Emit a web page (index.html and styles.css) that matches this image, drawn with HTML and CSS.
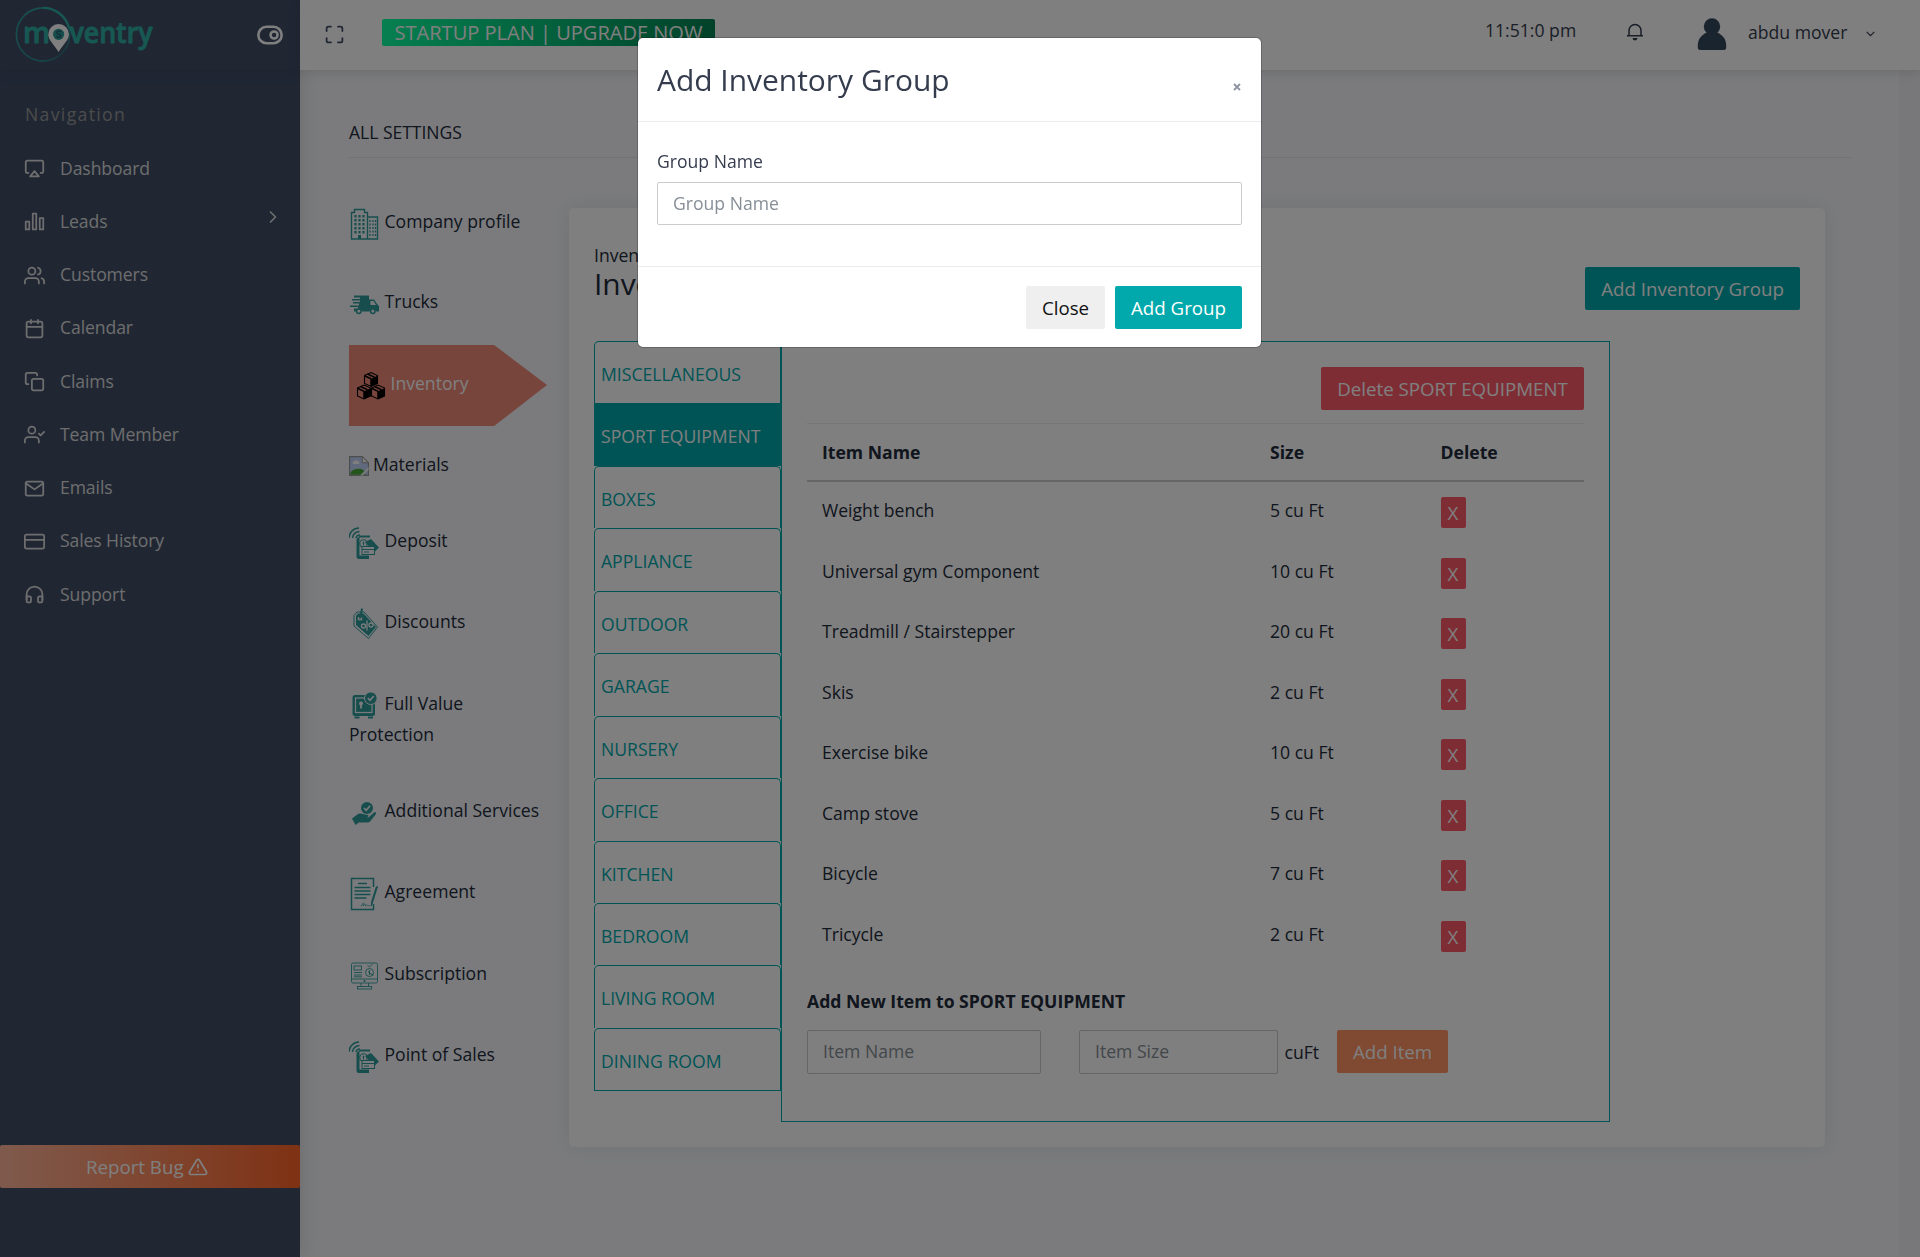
FILE: index.html
```html
<!DOCTYPE html>
<html lang="en">
<head>
<meta charset="utf-8">
<title>Moventry - Inventory settings</title>
<link rel="stylesheet" href="styles.css">
</head>
<body>
<svg class="defs" width="0" height="0">
  <symbol id="pos" viewBox="1 0 32 34">
    <path d="M1 12a10 10 0 0 1 10-10M4.500 12a7 7 0 0 1 7-6.500M8 12a4 4 0 0 1 4-3" fill="none" stroke="currentColor" stroke-width="1.500"/>
    <path d="M12 9.500h7l3 0v2H11.500v18H21v3.500H11a2.500 2.500 0 0 1-2.500-2.500V13z" fill="currentColor"/>
    <path d="M17 16l6-3 8 8.500-5 5z" fill="currentColor"/>
    <circle cx="15.500" cy="17.500" r="3.700" fill="none" stroke="currentColor" stroke-width="1.100"/>
    <path d="M15.500 15.500v4M14.500 17h2" stroke="currentColor"/>
    <rect x="14" y="20.500" width="12.500" height="8" fill="#f6f7fb" stroke="currentColor"/>
    <path d="M14 23.500h12.500M16 26h5" stroke="currentColor"/>
  </symbol>
</svg>
<div class="page">
  <aside class="sidebar">
    <div class="brand">
      <svg class="logo" width="145" height="62" viewBox="0 0 145 62">
        <defs><linearGradient id="ring" x1="0" y1="0" x2="1" y2="1"><stop offset="0" stop-color="#2fa5a2"/><stop offset=".75" stop-color="#2b8c91"/><stop offset="1" stop-color="#404e67"/></linearGradient></defs>
        <circle cx="30" cy="29.500" r="26.600" fill="none" stroke="url(#ring)" stroke-width="1.600"/>
        <path d="M30 2.900a26.600 26.600 0 0 1 26 20" fill="none" stroke="#2fb0a5" stroke-width="2.400"/>
        <text x="10" y="38" class="wordmark" textLength="27" lengthAdjust="spacingAndGlyphs">m</text>
        <text x="56.500" y="38" class="wordmark" textLength="83" lengthAdjust="spacingAndGlyphs">ventry</text>
        <path d="M45.600 19a10.300 10.300 0 0 1 10.300 10.300c0 6-5.500 9.700-10.300 17.700-4.800-8-10.300-11.700-10.300-17.700A10.300 10.300 0 0 1 45.600 19z" fill="#fff"/>
        <circle cx="45.600" cy="29.300" r="5.600" fill="#2c9a95"/>
        <path d="M48 27c-2-1.500-4.500-.8-4.300.8.200 1.500 4 1.300 4 3.200 0 1.700-3 1.800-4.600.4" fill="none" stroke="#27566c" stroke-width="1.200"/>
      </svg>
      <svg class="feather toggle" width="28" height="28" viewBox="0 0 24 24"><rect x="2" y="5" width="20" height="14" rx="7"/><circle cx="15.500" cy="12" r="3"/></svg>
    </div>
    <div class="nav-title">Navigation</div>
    <nav class="nav">
      <a><svg class="feather" viewBox="0 0 24 24"><path d="M5 17H4a2 2 0 0 1-2-2V5a2 2 0 0 1 2-2h16a2 2 0 0 1 2 2v10a2 2 0 0 1-2 2h-1"/><path d="M12 15l5 6H7z"/></svg><span>Dashboard</span></a>
      <a><svg class="feather" viewBox="0 0 24 24"><rect x="2" y="12" width="4" height="9"/><rect x="10" y="3" width="4" height="18"/><rect x="18" y="8" width="4" height="13"/></svg><span>Leads</span><svg class="feather chev" viewBox="0 0 24 24"><path d="M9 18l6-6-6-6"/></svg></a>
      <a><svg class="feather" viewBox="0 0 24 24"><path d="M17 21v-2a4 4 0 0 0-4-4H5a4 4 0 0 0-4 4v2"/><circle cx="9" cy="7" r="4"/><path d="M23 21v-2a4 4 0 0 0-3-3.870M16 3.130a4 4 0 0 1 0 7.750"/></svg><span>Customers</span></a>
      <a><svg class="feather" viewBox="0 0 24 24"><rect x="3" y="4" width="18" height="18" rx="2"/><path d="M16 2v4M8 2v4M3 10h18"/></svg><span>Calendar</span></a>
      <a><svg class="feather" viewBox="0 0 24 24"><rect x="9" y="9" width="13" height="13" rx="2"/><path d="M5 15H4a2 2 0 0 1-2-2V4a2 2 0 0 1 2-2h9a2 2 0 0 1 2 2v1"/></svg><span>Claims</span></a>
      <a><svg class="feather" viewBox="0 0 24 24"><path d="M17 21v-2a4 4 0 0 0-4-4H5a4 4 0 0 0-4 4v2"/><circle cx="9" cy="7" r="4"/><path d="M17 11l2 2 4-4"/></svg><span>Team Member</span></a>
      <a><svg class="feather" viewBox="0 0 24 24"><rect x="2" y="4" width="20" height="16" rx="2"/><path d="M22 6l-10 7L2 6"/></svg><span>Emails</span></a>
      <a><svg class="feather" viewBox="0 0 24 24"><rect x="1" y="4" width="22" height="16" rx="2"/><path d="M1 10h22"/></svg><span>Sales History</span></a>
      <a><svg class="feather" viewBox="0 0 24 24"><path d="M3 18v-6a9 9 0 0 1 18 0v6"/><path d="M21 19a2 2 0 0 1-2 2h-1a2 2 0 0 1-2-2v-3a2 2 0 0 1 2-2h3zM3 19a2 2 0 0 0 2 2h1a2 2 0 0 0 2-2v-3a2 2 0 0 0-2-2H3z"/></svg><span>Support</span></a>
    </nav>
    <div class="report">Report Bug <svg class="feather" viewBox="0 0 24 24"><path d="M10.290 3.860L1.820 18a2 2 0 0 0 1.710 3h16.940a2 2 0 0 0 1.710-3L13.710 3.860a2 2 0 0 0-3.420 0zM12 9v4M12 17v.1"/></svg></div>
  </aside>

  <div class="content">
    <header class="topbar">
      <svg class="feather full" viewBox="0 0 24 24"><path d="M8 3H5a2 2 0 0 0-2 2v3m18 0V5a2 2 0 0 0-2-2h-3m0 18h3a2 2 0 0 0 2-2v-3M3 16v3a2 2 0 0 0 2 2h3"/></svg>
      <div class="plan">STARTUP PLAN | UPGRADE NOW</div>
      <div class="clock">11:51:0 pm</div>
      <svg class="bell" width="18" height="19" viewBox="0 0 18 19"><path d="M1 12.800h16M3 12.500V7.500a6 6 0 0 1 12 0v5" fill="none" stroke="currentColor" stroke-width="1.500"/><path d="M6.500 15h5a2.500 2.500 0 0 1-5 0z" fill="currentColor"/></svg>
      <svg class="avatar" width="30" height="34" viewBox="0 0 30 34"><circle cx="15" cy="9.500" r="8.200"/><path d="M10 15.500h10c5 2 9.200 6 9.200 13v2a2.500 2.500 0 0 1-2.500 2.500H3.300A2.500 2.500 0 0 1 .8 30.500v-2c0-7 4.200-11 9.200-13z"/></svg>
      <div class="user">abdu mover</div>
      <svg class="caret" width="9" height="6" viewBox="0 0 9 6"><path d="M.7.8l3.800 3.800L8.300.8" fill="none" stroke="currentColor" stroke-width="1.200"/></svg>
    </header>

    <main class="main">
      <h6 class="page-title">ALL SETTINGS</h6>
      <div class="columns">
        <ul class="settings">
          <li class="h80"><svg width="32" height="34" viewBox="0 0 32 34"><path d="M2.500 32V5.500h3v-3h10v3h3V32zM18.500 10H28.500v22h-10z" fill="none" stroke="currentColor" stroke-width="1.400"/><path d="M6.500 8v19M10.500 8v19M14.500 8v19" stroke="currentColor" stroke-width="2.200" stroke-dasharray="2.500 1.500"/><path d="M21 13v17M24 13v17M26.500 13v17" stroke="currentColor" stroke-width="1.300" stroke-dasharray="2 1.500"/><path d="M9 28h3v4H9z" fill="currentColor"/></svg><span>Company profile</span></li>
          <li class="h82"><svg width="32" height="34" viewBox="0 0 32 34"><g transform="translate(0 5)"><path d="M5 3.500h15v4h5l3.500 5 1.500 1.500v5.500h-3a3.200 3.200 0 0 0-6.300 0H13a3.200 3.200 0 0 0-6.300 0H5v-3h4v-1.500H1v-1.500h9v-2H4V10h7V8.500H3V7h8V5.500H5z" fill="currentColor"/><path d="M21.500 9h3l2.500 4h-5.500z" fill="#f6f7fb"/><circle cx="9.800" cy="19.300" r="2.200" fill="none" stroke="currentColor" stroke-width="1.500"/><circle cx="23.800" cy="19.300" r="2.200" fill="none" stroke="currentColor" stroke-width="1.500"/></g></svg><span>Trucks</span></li>
          <li class="active"><div class="arrow"><svg width="30" height="30" viewBox="0 0 30 30"><path d="M8.500 4.500L15 1.500l6.500 3v8L15 15.500l-6.500-3zM1.500 17L8 14l6.500 3v8L8 28l-6.500-3zM15.500 17l6.500-3 6.500 3v8L22 28l-6.500-3z" fill="#ef8b79" stroke="#000" stroke-width="1.100"/><path d="M15 7.800l6.500-3v8L15 15.500zM8 20.300l6.500-3v8L8 28zM22 20.300l6.500-3v8L22 28z" fill="#000"/><path d="M8.500 4.800L15 7.800M11.500 3l7 3.200M1.500 17.300l6.500 3M4.500 15.500l7 3.200M15.500 17.300l6.500 3M18.500 15.500l7 3.200M15 7.800v7.700M8 20.300V28M22 20.300V28" stroke="#000" stroke-width="1.500"/></svg><span>Inventory</span></div></li>
          <li class="h76"><svg class="broken" width="20" height="20" viewBox="0 0 20 20"><path d="M.6.600h12.600l6.200 6.200v12.600H.6z" fill="#c3d5f8" stroke="#9a9a9a" stroke-width="1.200"/><path d="M4 8a2 2 0 0 1 2-3 2.500 2.500 0 0 1 4 1 1.500 1.500 0 0 1 0 2z" fill="#fff"/><path d="M1.200 18.800c0-4 4-6 8.500-6 4 0 6 1.500 7 6z" fill="#4da83a"/><path d="M11 19.500l8.500-8.500v3L14 19.500z" fill="#f6f7fb"/><path d="M13.200.600v6.200h6.200z" fill="#fff" stroke="#9a9a9a"/></svg><span>Materials</span></li>
          <li><svg width="32" height="34"><use href="#pos"/></svg><span>Deposit</span></li>
          <li class="h82"><svg width="32" height="34" viewBox="0 0 32 34"><path d="M5 8.500l3-3.500h7l13.500 15-9 11.500L5 19z" fill="none" stroke="currentColor"/><path d="M7 9l2-2.500h5.500L27 20l-7.500 9L7 18z" fill="currentColor"/><path d="M13 1.500l-1.500 8" stroke="currentColor" stroke-width="2"/><path d="M9.500 10v2.500h3v-2" stroke="#f6f7fb" stroke-width="1.300" fill="none"/><path d="M18 13.500v10" stroke="#f6f7fb" stroke-width="1.300"/><circle cx="14.500" cy="19" r="2" fill="none" stroke="#f6f7fb" stroke-width="1.300"/><circle cx="22" cy="18" r="2" fill="none" stroke="#f6f7fb" stroke-width="1.300"/></svg><span>Discounts</span></li>
          <li class="h107"><svg width="32" height="34" viewBox="0 0 32 34"><rect x="3.500" y="6" width="22.500" height="21" rx="2.500" fill="currentColor"/><rect x="6.500" y="9" width="16.500" height="14.500" fill="none" stroke="#f6f7fb" stroke-width="1.200"/><circle cx="12" cy="14.500" r="2" fill="#f6f7fb"/><path d="M12 15v4.500" stroke="#f6f7fb" stroke-width="1.800"/><circle cx="21.800" cy="9.200" r="6.300" fill="currentColor" stroke="#f6f7fb"/><path d="M18.800 9l2.200 2.300 3.800-4.300" fill="none" stroke="#f6f7fb" stroke-width="1.600"/><path d="M5.500 28.500h5M19 28.500h5" stroke="currentColor" stroke-width="2"/></svg><span>Full Value</span><div class="wrap">Protection</div></li>
          <li><svg width="32" height="34" viewBox="0 0 32 34"><g transform="translate(0 -1)"><path d="M3 23.500l6-4.500c3-1.300 5 .5 9 .8 2 .2 1.800 2.400-.5 2.600h-4 6l5.500-4.800c1.600-1 3 .3 1.800 1.700l-5.500 7c-1 1-2 1.400-3.500 1.300l-8-.2L6.500 30z" fill="currentColor"/><circle cx="18" cy="13" r="6" fill="currentColor"/><path d="M15 13l2.200 2.300 3.900-4.500" fill="none" stroke="#f6f7fb" stroke-width="1.600"/></g></svg><span>Additional Services</span></li>
          <li class="h82"><svg width="32" height="34" viewBox="0 0 32 34"><path d="M24.500 10V1.500H2.500v31h22V27" fill="none" stroke="currentColor" stroke-width="1.500"/><path d="M9 6.500h9M5.500 10.500h16M5.500 14h16M5.500 17.500h16M5.500 21h12" stroke="currentColor" stroke-width="1.300"/><path d="M28.500 9.500l-5 16-1 3 .2-4 4.500-14.500z" fill="currentColor" stroke="currentColor"/><path d="M12 29.500c2-5 4-4 2-.5 1.500-3 3-2 2.500 0 2-2 2 .5 6-.5" fill="none" stroke="currentColor" stroke-width=".7"/></svg><span>Agreement</span></li>
          <li><svg width="32" height="34" viewBox="0 0 32 34"><g fill="none" stroke="currentColor" stroke-width=".9"><rect x="2.500" y="4" width="26" height="20" rx="1.500"/><path d="M2.500 20h26M12 24v3.500M19.500 24v3.500"/><rect x="8.500" y="27.500" width="14" height="2.500"/><rect x="5" y="7" width="7.500" height="4"/><path d="M5 13.500h8M5 16h8M5 17.800h8M18.500 6.500l2 1.500 3-3"/><circle cx="20.500" cy="13.500" r="4"/><path d="M20.500 11v5M19 12.500l3 2.500 2.500 1"/></g><circle cx="15.500" cy="22" r="1" fill="currentColor"/></svg><span>Subscription</span></li>
          <li><svg width="32" height="34"><use href="#pos"/></svg><span>Point of Sales</span></li>
        </ul>

        <section class="card">
          <div class="card-head">
            <div><h5>Inventory</h5><h2>Inventory</h2></div>
            <button class="btn teal">Add Inventory Group</button>
          </div>
          <div class="tabs">
            <div class="tablist">
              <a>MISCELLANEOUS</a><a class="on">SPORT EQUIPMENT</a><a>BOXES</a><a>APPLIANCE</a><a>OUTDOOR</a><a>GARAGE</a><a>NURSERY</a><a>OFFICE</a><a>KITCHEN</a><a>BEDROOM</a><a>LIVING ROOM</a><a>DINING ROOM</a>
            </div>
            <div class="pane">
              <div class="pane-actions"><button class="btn red">Delete SPORT EQUIPMENT</button></div>
              <div class="row head"><span>Item Name</span><span>Size</span><span>Delete</span></div>
              <div class="row"><span>Weight bench</span><span>5 cu Ft</span><button class="x">X</button></div>
              <div class="row"><span>Universal gym Component</span><span>10 cu Ft</span><button class="x">X</button></div>
              <div class="row"><span>Treadmill / Stairstepper</span><span>20 cu Ft</span><button class="x">X</button></div>
              <div class="row"><span>Skis</span><span>2 cu Ft</span><button class="x">X</button></div>
              <div class="row"><span>Exercise bike</span><span>10 cu Ft</span><button class="x">X</button></div>
              <div class="row"><span>Camp stove</span><span>5 cu Ft</span><button class="x">X</button></div>
              <div class="row"><span>Bicycle</span><span>7 cu Ft</span><button class="x">X</button></div>
              <div class="row"><span>Tricycle</span><span>2 cu Ft</span><button class="x">X</button></div>
              <div class="add-title">Add New Item to SPORT EQUIPMENT</div>
              <div class="add-form">
                <input class="field name" placeholder="Item Name">
                <input class="field size" placeholder="Item Size">
                <span class="unit">cuFt</span>
                <button class="btn orange">Add Item</button>
              </div>
            </div>
          </div>
        </section>
      </div>
    </main>
  </div>
</div>

<div class="backdrop">
  <div class="modal">
    <div class="modal-head"><h4>Add Inventory Group</h4><svg class="close" width="8" height="8" viewBox="0 0 8 8"><path d="M1 1l6 6M7 1L1 7" stroke="currentColor" stroke-width="1.800"/></svg></div>
    <div class="modal-body"><label>Group Name</label><input class="field" placeholder="Group Name"></div>
    <div class="modal-foot"><button class="btn gray">Close</button><button class="btn teal">Add Group</button></div>
  </div>
</div>
</body>
</html>
```
FILE: styles.css
```css
* { box-sizing: border-box; }
body { margin: 0; font: 17.6px/26px "Open Sans", sans-serif; color: #353c4e; background: #f1f1f4; height: 1257px; overflow: hidden; }
h2, h4, h5, h6 { margin: 0; font-weight: 400; }
button, input { font-family: inherit; margin: 0; }
.defs { display: block; height: 0; }
.feather { fill: none; stroke: currentColor; stroke-width: 2; stroke-linecap: round; stroke-linejoin: round; width: 21px; height: 21px; flex: none; }
.page { display: flex; height: 1257px; }

.sidebar { width: 300px; flex: none; background: #404e67; color: #dcdcdc; display: flex; flex-direction: column; box-shadow: 1px 0 20px rgba(0,0,0,.12); z-index: 1; }
.brand { height: 70px; display: flex; justify-content: space-between; padding: 5px 16px 0 13px; box-shadow: 0 4px 12px rgba(0,0,0,.06); }
.logo { overflow: visible; }
.wordmark { font: 600 29px "Open Sans", sans-serif; fill: #2fb0a5; stroke: #2fb0a5; stroke-width: .9; stroke-linejoin: round; }
.toggle { width: 28px; height: 28px; color: #fff; margin-top: 16px; stroke-width: 2.2; }
.nav-title { padding: 32px 25px 0; height: 71px; line-height: 24px; letter-spacing: 1.35px; color: #999; }
.nav a { display: flex; align-items: center; height: 53.25px; padding: 0 23px 0 24px; }
.nav a .feather { margin-top: 2px; }
.nav a span { margin-left: 15px; letter-spacing: -.1px; }
.nav a .chev { width: 20px; height: 20px; margin: -8px -6px 0 auto; }
.report { margin-top: auto; margin-bottom: 69px; height: 43px; border-radius: 2px; display: flex; align-items: center; padding-left: 86px; color: #fff; font-size: 18.7px; background: linear-gradient(90deg, #ffb59a, #fe6428); }
.report .feather { width: 20px; height: 20px; margin-left: 4px; }

.content { flex: 1; min-width: 0; display: flex; flex-direction: column; }
.topbar { height: 70px; flex: none; background: #fff; display: flex; align-items: flex-start; box-shadow: 0 2px 12px rgba(0,0,0,.12); z-index: 1; }
.full { margin: 24px 0 0 24px; color: #404e67; }
.plan { margin: 19px 0 0 37px; width: 333px; height: 27px; line-height: 27px; border-radius: 2px; color: #fff; font-size: 20.05px; text-align: center; white-space: nowrap; background: linear-gradient(90deg, #0cffa0, #048454); }
.clock { margin: 17px 0 0 auto; width: 92px; white-space: nowrap; }
.bell { margin: 23px 0 0 49px; }
.avatar { margin: 17px 0 0 53px; fill: #34495e; }
.user { margin: 19px 0 0 21px; width: 101px; white-space: nowrap; }
.caret { margin: 31px 45px 0 17px; }

.main { flex: 1; margin-right: 21px; padding: 50px 47px 0 49px; background: #f6f7fb; }
.page-title { font-size: 17.5px; height: 38px; line-height: 24px; border-bottom: 1px solid #e6e7eb; color: #222b3a; }
.columns { display: flex; }
.settings { list-style: none; margin: 44px 0 0; padding: 0; width: 220px; }
.settings li { height: 81px; line-height: 38px; display: flex; flex-wrap: wrap; align-content: flex-start; color: #222b3a; }
.settings li > svg { color: #2f9d9b; margin-top: 5px; }
.settings li span { margin-left: 3.5px; white-space: nowrap; }
.settings .h76 { height: 76px; }
.settings .h80 { height: 80px; }
.settings .h82 { height: 82px; }
.settings .h107 { height: 107px; }
.settings .wrap { width: 100%; line-height: 26px; margin-top: -2px; }
.settings li > .broken { margin-top: 11px; }
.settings .broken + span { margin-left: 4px; }
.arrow { width: 198px; height: 81px; margin-top: -19px; padding: 26px 0 0 7px; display: flex; background: #ef8b79; clip-path: polygon(0 0, 73.3% 0, 100% 49.5%, 73.3% 100%, 0 100%); color: #fff; }
.settings .arrow span { margin: -7px 0 0 4.5px; }

.card { width: 1256px; flex: none; height: 939px; margin-top: 50px; border-radius: 5px; background: #fff; padding: 35px 25px 0; box-shadow: 0 0 18px rgba(69,90,100,.12); }
.card-head { display: flex; justify-content: space-between; height: 98px; color: #222b3a; }
.card-head h5 { font-size: 17.6px; font-weight: 500; line-height: 24px; }
.card-head h2 { font-size: 29.9px; line-height: 32px; margin-top: 1px; }
.card-head .btn { margin-top: 24px; }
.btn { border: 0; border-radius: 2px; height: 43px; font-size: 18.7px; line-height: 43px; padding: 0; text-align: center; color: #fff; white-space: nowrap; }
.teal { background: #01a9ac; width: 215px; }
.red { width: 263px; }
.red, .x { background: #ff5b6b; }
.orange { background: #fe9365; width: 111px; }
.gray { background: #efefef; color: #111; width: 79px; }

.tabs { display: flex; align-items: flex-start; }
.tablist { width: 187px; border-bottom: 1px solid #01a9ac; }
.tablist a { display: block; height: 62.45px; line-height: 50.6px; padding: 7px 0 0 6px; border: 1px solid #01a9ac; border-bottom: 0; border-radius: 5px 5px 0 0; color: #01a9ac; white-space: nowrap; }
.tablist .on { background: #01a9ac; color: #fff; border-radius: 0; }
.pane { width: 829px; height: 781px; border: 1px solid #01a9ac; padding: 25px 25px 0; }
.pane-actions { display: flex; justify-content: flex-end; height: 56px; }
.row { display: grid; grid-template-columns: 448px 170.5px auto; padding: 15px 0 0 15px; height: 60.55px; align-items: start; color: #222b3a; line-height: 26px; }
.head { height: 59px; border-top: 1px solid #e9ecef; border-bottom: 2px solid #ccc; font-weight: 700; }
.x { width: 25px; height: 31px; border: 0; border-radius: 2px; padding: 0; color: #fff; font-size: 18.7px; line-height: 31px; }
.add-title { font-weight: 700; color: #222b3a; margin-top: 21.4px; }
.add-form { display: flex; margin-top: 16px; }
.field { border: 1px solid #ccc; border-radius: 2px; height: 43px; padding: 0 15px 2px; font-size: 17.6px; background: #fff; width: 100%; color: #495057; }
.field::placeholder { color: #868e96; opacity: 1; }
.name { width: 234px; height: 44px; }
.size { width: 199px; height: 44px; margin-left: 38px; }
.unit { margin: 9px 0 0 6.5px; width: 52.5px; color: #222b3a; }

.backdrop { position: fixed; inset: 0; background: rgba(0,0,0,.5); z-index: 10; }
.modal { width: 623px; height: 309px; margin: 38px 0 0 638px; background: #fff; border-radius: 5px; box-shadow: 0 0 0 1px rgba(0,0,0,.2); }
.modal-head { height: 84px; border-bottom: 1px solid #e9ecef; display: flex; justify-content: space-between; padding: 22px 19px 0; }
.modal-head h4 { font-size: 29.95px; line-height: 40px; }
.close { color: #8d93a0; margin: 23px 1px 0 0; }
.modal-body { height: 145px; padding: 26px 19px 0; border-bottom: 1px solid #e9ecef; }
.modal-body label { display: block; height: 34px; }
.modal-foot { display: flex; justify-content: flex-end; gap: 10px; padding: 19px 19px 0; }
.modal-foot .teal { width: 127px; }
```
